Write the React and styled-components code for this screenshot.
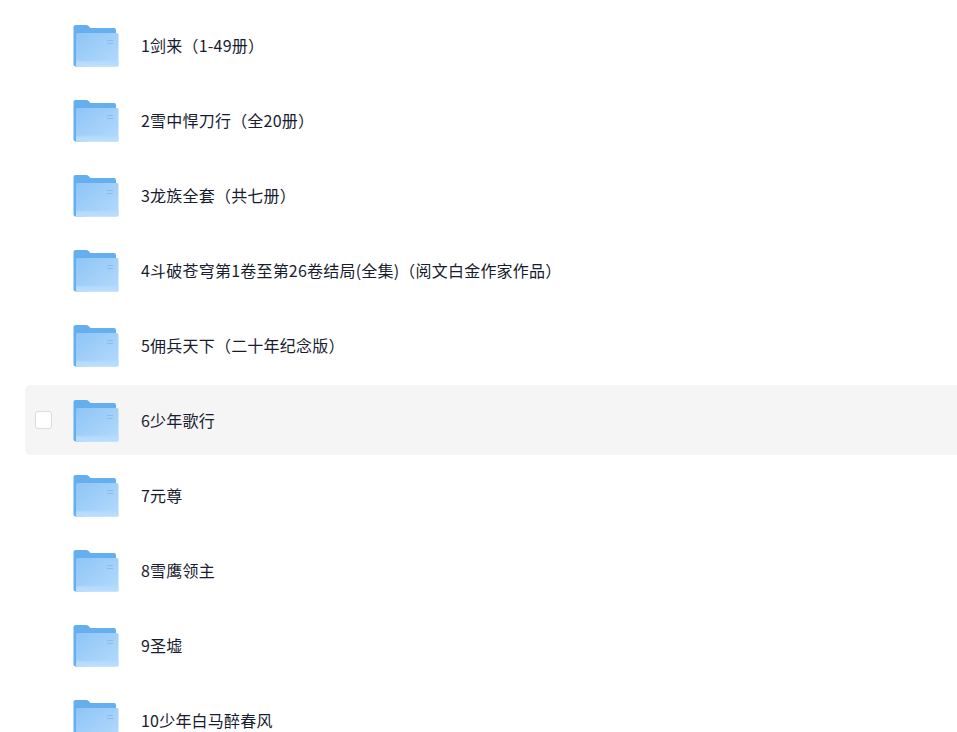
import React from "react";
import styled, { createGlobalStyle } from "styled-components";

const books = [
  "1剑来（1-49册）",
  "2雪中悍刀行（全20册）",
  "3龙族全套（共七册）",
  "4斗破苍穹第1卷至第26卷结局(全集)（阅文白金作家作品）",
  "5佣兵天下（二十年纪念版）",
  "6少年歌行",
  "7元尊",
  "8雪鹰领主",
  "9圣墟",
  "10少年白马醉春风",
];

const FolderIcon = ({ id }) => (
  <FolderSvg viewBox="0 0 46 42" width="46" height="42">
    <defs>
      <linearGradient id={id} x1="0" y1="0" x2="1" y2="1">
        <stop offset="0" stopColor="#8ec5f6" />
        <stop offset="1" stopColor="#b4dafc" />
      </linearGradient>
      <linearGradient id={`${id}-strip`} x1="0" y1="0" x2="0" y2="1">
        <stop offset="0" stopColor="#b5dbfd" stopOpacity="0" />
        <stop offset="0.35" stopColor="#b5dbfd" />
        <stop offset="1" stopColor="#badefd" />
      </linearGradient>
    </defs>
    <path
      d="M0.500 2 a2 2 0 0 1 2-2 H13 q1.800 0 2.800 1.300 L17.500 3 H41 a2 2 0 0 1 2 2 V10 H45 V40 L3.500 41.500 a3 3 0 0 1-3-1.500z"
      fill="#65afef"
    />
    <path
      d="M3 9.500 a1.500 1.500 0 0 1 1.500-1.500 H44 a1.500 1.500 0 0 1 1.500 1.500 V40 a1.500 1.500 0 0 1-1.500 1.500 H3z"
      fill={`url(#${id})`}
    />
    <rect x="3" y="35" width="42.500" height="6.500" rx="1" fill={`url(#${id}-strip)`} />
    <rect x="34" y="15" width="6" height="1" fill="#86bdee" />
    <rect x="34" y="18" width="6" height="1" fill="#86bdee" />
  </FolderSvg>
);

const App = () => (
  <>
    <GlobalStyle />
    <List>
      {books.map((name, i) => (
        <Row key={name} $active={i === 5}>
          <Check $active={i === 5} />
          <FolderIcon id={`folder-${i}`} />
          <Name>{name}</Name>
        </Row>
      ))}
    </List>
  </>
);

const GlobalStyle = createGlobalStyle`
  html, body {
    margin: 0;
    height: 100%;
    overflow: hidden;
    background: #fff;
  }
  body {
    font-family: "Noto Sans CJK SC", "Noto Sans", sans-serif;
  }
`;

const List = styled.div`
  display: flex;
  flex-direction: column;
  gap: 5px;
  padding: 10px 0 0 25px;
  height: 732px;
  box-sizing: border-box;
  overflow: hidden;
`;

const Row = styled.div`
  flex: 0 0 70px;
  display: flex;
  align-items: center;
  padding-left: 10px;
  border-radius: 5px 0 0 5px;
  background: ${(p) => (p.$active ? "#f5f5f5" : "transparent")};
`;

const Check = styled.span`
  flex: 0 0 auto;
  box-sizing: border-box;
  width: 17px;
  height: 18px;
  margin-right: 21px;
  border: 1px solid #dcdcdc;
  border-radius: 3px;
  background: #fff;
  visibility: ${(p) => (p.$active ? "visible" : "hidden")};
`;

const FolderSvg = styled.svg`
  flex: 0 0 auto;
  display: block;
  margin: 2px 22px 0 0;
`;

const Name = styled.span`
  font-size: 16px;
  line-height: 24px;
  letter-spacing: 0.21px;
  color: #181c30;
  white-space: nowrap;
`;

export default App;
